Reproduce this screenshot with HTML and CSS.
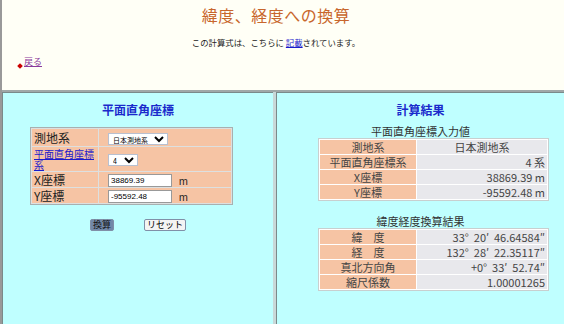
FILE: index.html
```html
<!DOCTYPE html>
<html lang="ja">
<head>
  <meta charset="UTF-8">
  <title>緯度、経度への換算</title>
  <link rel="stylesheet" href="styles.css">
</head>
<body>

  <h1>緯度、経度への換算</h1>
  <p class="note">この計算式は、こちらに <a href="#">記載</a>されています。</p>

  <div class="back"><span class="bullet"></span><a href="#">戻る</a></div>

  <div class="frame">
    <!-- 入力 -->
    <div class="pane">
      <h2>平面直角座標</h2>
      <table class="input-table">
        <tr class="r1">
          <th>測地系</th>
          <td><select class="sel-datum"><option>日本測地系</option></select></td>
        </tr>
        <tr class="r2">
          <th><a href="#" class="small-link">平面直角座標系</a></th>
          <td><select class="sel-zone"><option>4</option></select></td>
        </tr>
        <tr>
          <th>X座標</th>
          <td><input type="text" value="38869.39"> <span class="unit">m</span></td>
        </tr>
        <tr>
          <th>Y座標</th>
          <td><input type="text" value="-95592.48"> <span class="unit">m</span></td>
        </tr>
      </table>
      <div class="buttons">
        <button class="btn btn-main">換算</button>
        <button class="btn">リセット</button>
      </div>
    </div>

    <!-- 結果 -->
    <div class="pane">
      <h2>計算結果</h2>
      <div class="caption">平面直角座標入力値</div>
      <table class="result-table">
        <tr><th>測地系</th><td class="center">日本測地系</td></tr>
        <tr><th>平面直角座標系</th><td>4 系</td></tr>
        <tr><th>X座標</th><td>38869.39 m</td></tr>
        <tr><th>Y座標</th><td>-95592.48 m</td></tr>
      </table>
      <div class="caption">緯度経度換算結果</div>
      <table class="result-table">
        <tr><th>緯　度</th><td>33°&nbsp; 20′&nbsp; 46.64584″</td></tr>
        <tr><th>経　度</th><td>132°&nbsp; 28′&nbsp; 22.35117″</td></tr>
        <tr><th>真北方向角</th><td>+0°&nbsp; 33′&nbsp; 52.74″</td></tr>
        <tr><th>縮尺係数</th><td>1.00001265</td></tr>
      </table>
    </div>
  </div>

</body>
</html>
```

FILE: styles.css
```css
body {
  margin: 0;
  height: 324px;
  overflow: hidden;
  background-color: #fffff6;
  border-left: 2px solid #999;
  font-family: "Noto Sans CJK JP", sans-serif;
  color: #222;
}

h1 {
  margin: 0;
  padding: 4px 14px 0 0;
  text-align: center;
  font-size: 16px;
  font-weight: normal;
  letter-spacing: 0.5px;
  color: #c8662c;
  line-height: 22px;
}

.note {
  margin: 10px 0 0;
  padding-right: 14px;
  text-align: center;
  font-size: 8.4px;
  line-height: 12px;
}

.note a {
  color: #1a1acc;
}

.back {
  margin: 8px 0 0 17px;
  font-size: 9px;
  line-height: 12px;
  position: relative;
  padding-left: 5px;
}

.back a {
  color: #8b3a9b;
}

.bullet {
  position: absolute;
  left: -1px;
  top: 8px;
  width: 4px;
  height: 4px;
  background: #c00;
  transform: rotate(45deg);
}

.frame {
  margin-top: 22px;
  display: grid;
  grid-template-columns: 271px 1fr;
  column-gap: 3px;
  border-top: 2px solid #a0a8a8;
  background: #c8d8d8;
  height: 240px;
}

.pane {
  background-color: #bfffff;
  border-left: 1px solid #7a8a8a;
  border-top: 1px solid #7a8a8a;
}

h2 {
  margin: 9px 0 0;
  text-align: center;
  font-size: 12px;
  color: #1a2acc;
  line-height: 16px;
}

.input-table {
  margin: 9px 0 0 27px;
  width: 203px;
  border-collapse: separate;
  border-spacing: 1px;
  background: #dde0e0;
  border: 1px solid #a8b0b0;
  line-height: 13px;
  font-size: 12px;
}

.input-table th,
.input-table td {
  background-color: #f6c4a4;
  text-align: left;
  font-weight: normal;
  padding: 0 2px;
  line-height: 13px;
}

.input-table th {
  width: 62px;
  font-size: 12px;
  height: 15px;
}

.input-table td {
  padding-left: 9px;
  height: 15px;
}

.input-table .r1 th,
.input-table .r1 td {
  height: 17px;
}

.input-table .r2 th,
.input-table .r2 td {
  height: 24px;
}

.small-link {
  font-size: 10px;
  line-height: 11px;
  display: block;
  color: #1a1acc;
}

select {
  font-family: "Noto Sans CJK JP", sans-serif;
  font-size: 7px;
  height: 12px;
  padding: 0;
  border: 1px solid #b8c0d0;
  background: #fff;
  vertical-align: middle;
}

.sel-datum {
  width: 60px;
}

.sel-zone {
  width: 30px;
}

input[type="text"] {
  width: 58px;
  height: 11px;
  padding: 0 2px;
  font-size: 8px;
  font-family: "Liberation Sans", sans-serif;
  border: 1px solid #999;
  vertical-align: middle;
}

.unit {
  margin-left: 4px;
  font-size: 10px;
  vertical-align: middle;
}

.buttons {
  margin: 14px 0 0 87px;
  display: flex;
  gap: 30px;
}

.btn {
  font-family: "Noto Sans CJK JP", sans-serif;
  font-size: 9px;
  line-height: 10px;
  padding: 0 2px;
  background: #f4f4f4;
  border: 1px solid #8090a8;
  border-radius: 2px;
}

.btn-main {
  background: #7288a8;
  color: #111;
}

.caption {
  margin-top: 6px;
  text-align: center;
  font-size: 11px;
  line-height: 14px;
  color: #333;
}

.result-table + .caption {
  margin-top: 13px;
}

.result-table {
  margin: 0 0 0 41px;
  width: 231px;
  border-collapse: separate;
  border-spacing: 1px;
  background: #fff;
  border: 1px solid #c8d0d0;
  font-size: 11px;
  color: #444;
}

.result-table th,
.result-table td {
  height: 14px;
  line-height: 14px;
  padding: 0 2px;
}

.result-table th {
  width: 92px;
  font-weight: normal;
  background-color: #f6c4a4;
  text-align: center;
}

.result-table td {
  background-color: #e8e8ec;
  text-align: right;
}

.result-table td.center {
  text-align: center;
}
```
